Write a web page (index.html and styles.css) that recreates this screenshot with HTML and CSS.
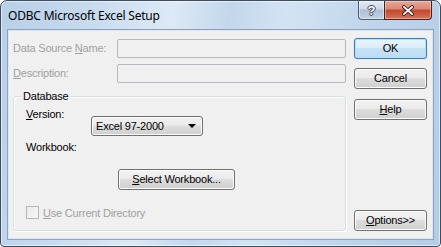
FILE: index.html
```html
<!DOCTYPE html>
<html lang="en">
<head>
  <meta charset="UTF-8" />
  <title>ODBC Microsoft Excel Setup</title>
  <link rel="stylesheet" href="styles.css">
</head>
<body>
  <div class="window">
    <div class="titlebar">
      <span class="title">ODBC Microsoft Excel Setup</span>
      <div class="caption-btns">
        <div class="cap cap-help">?</div>
        <div class="cap cap-close">
          <svg width="12" height="11" viewBox="0 0 12 11">
            <path d="M2 2 L10 9 M10 2 L2 9" stroke="#3b2020" stroke-width="3.6" stroke-linecap="square" />
            <path d="M2 2 L10 9 M10 2 L2 9" stroke="#fff" stroke-width="1.8" stroke-linecap="square" />
          </svg>
        </div>
      </div>
    </div>

    <div class="client">
      <div class="form">
        <div class="field">
          <span class="label disabled">Data Source <u>N</u>ame:</span>
          <div class="edit"></div>
        </div>
        <div class="field">
          <span class="label disabled"><u>D</u>escription:</span>
          <div class="edit"></div>
        </div>

        <div class="group">
          <span class="group-title">Database</span>
          <div class="version-row">
            <span class="label version-label"><u>V</u>ersion:</span>
            <div class="combo">
              <span>Excel 97-2000</span>
              <span class="arrow"></span>
            </div>
          </div>
          <div class="label workbook-label">Workbook:</div>
          <div class="btn select-btn"><u>S</u>elect Workbook...</div>
          <div class="check-row">
            <span class="checkbox"></span>
            <span class="disabled"><u>U</u>se Current Directory</span>
          </div>
        </div>
      </div>

      <div class="buttons">
        <div class="btn btn-default">OK</div>
        <div class="btn btn-cancel">Cancel</div>
        <div class="btn btn-help"><u>H</u>elp</div>
        <div class="btn btn-options"><u>O</u>ptions&gt;&gt;</div>
      </div>
    </div>
  </div>
</body>
</html>
```

FILE: styles.css
```css
* {
  box-sizing: border-box;
}

body {
  margin: 0;
  background: #fff;
}

.window {
  width: 441px;
  height: 247px;
  border: 1px solid #3d4d60;
  border-radius: 7px 7px 4px 4px;
  padding: 0 7px 7px 7px;
  background: linear-gradient(100deg, #b7cfe8 0%, #c6daee 18%, #dde9f6 36%, #c3d7ec 48%, #d3e3f3 60%, #bfd5eb 78%, #b5cce6 100%);
  box-shadow: inset 0 0 0 1px rgba(255, 255, 255, 0.55);
  overflow: hidden;
}

.titlebar {
  height: 29px;
  display: flex;
  justify-content: space-between;
  align-items: flex-start;
}

.title {
  font: 12px "Noto Sans", "Open Sans", sans-serif;
  color: #000;
  margin-top: 7px;
  line-height: 15px;
  letter-spacing: -0.2px;
}

.caption-btns {
  display: flex;
  margin-right: 1px;
}

.cap {
  height: 19px;
  display: flex;
  justify-content: center;
  align-items: center;
  border: 1px solid #4f5f73;
  border-top: none;
}

.cap-help {
  width: 26px;
  border-right: none;
  border-radius: 0 0 0 4px;
  background: linear-gradient(#e4ebf3 0%, #cdd8e5 45%, #aebed2 50%, #c3d2e3 100%);
  color: #fff;
  font: bold 13px "Liberation Sans", Arial, sans-serif;
  text-shadow: 1px 0 0 #3a4a5e, -1px 0 0 #3a4a5e, 0 1px 0 #3a4a5e, 0 -1px 0 #3a4a5e;
  box-shadow: inset 0 0 0 1px rgba(255, 255, 255, 0.45);
}

.cap-close {
  width: 48px;
  border-color: #4a1f1a;
  border-radius: 0 0 4px 0;
  background: linear-gradient(#e8a797 0%, #d98773 45%, #c2462c 50%, #d4735b 100%);
  box-shadow: inset 0 0 0 1px rgba(255, 220, 210, 0.5);
}

.client {
  height: 209px;
  border: 1px solid #dce6f1;
  box-shadow: 0 0 0 1px #8ea3bb;
  background: #f0f0f0;
  display: flex;
  gap: 8px;
  padding: 7px 5px 0 4px;
  font: 11px "Liberation Sans", Arial, sans-serif;
  letter-spacing: -0.2px;
  color: #000;
}

.form {
  width: 333px;
  padding-top: 1px;
}

.disabled {
  color: #a0a0a0;
}

.field {
  display: flex;
  align-items: center;
  justify-content: space-between;
  margin-bottom: 6px;
}

.label {
  line-height: 13px;
}

.edit {
  width: 229px;
  height: 19px;
  border: 1px solid #b4b8bc;
  border-radius: 2px;
  background: #f0f0f0;
}

.group {
  margin-top: 13px;
  height: 135px;
  border: 1px solid #d5dfe5;
  border-radius: 3px;
  box-shadow: inset 1px 1px 0 #fff, 1px 1px 0 #fff;
  padding: 0 0 0 12px;
}

.group-title {
  display: table;
  margin: -7px 0 0 -4px;
  padding: 0 1px;
  line-height: 13px;
  background: #f0f0f0;
}

.version-row {
  display: flex;
  align-items: flex-start;
  margin-top: 13px;
}

.version-label {
  width: 65px;
  margin-top: -8px;
}

.combo {
  width: 112px;
  height: 20px;
  border: 1px solid #707070;
  border-radius: 3px;
  background: linear-gradient(#f2f2f2 0%, #ebebeb 45%, #dddddd 50%, #cfcfcf 100%);
  box-shadow: inset 0 0 0 1px #fbfbfb;
  display: flex;
  align-items: center;
  justify-content: space-between;
  padding: 0 4px 0 4px;
}

.arrow {
  width: 0;
  height: 0;
  border-left: 4px solid transparent;
  border-right: 4px solid transparent;
  border-top: 4px solid #000;
  margin-right: 2px;
}

.workbook-label {
  margin-top: 5px;
}

.btn {
  height: 21px;
  border: 1px solid #707070;
  border-radius: 3px;
  background: linear-gradient(#f2f2f2 0%, #ebebeb 45%, #dddddd 50%, #cfcfcf 100%);
  box-shadow: inset 0 0 0 1px #fcfcfc;
  display: flex;
  align-items: center;
  justify-content: center;
  line-height: 13px;
}

.select-btn {
  width: 117px;
  margin: 15px 0 0 92px;
}

.check-row {
  display: flex;
  align-items: center;
  margin-top: 16px;
  gap: 4px;
}

.checkbox {
  width: 13px;
  height: 13px;
  border: 1px solid #b8b8b8;
  background: linear-gradient(135deg, #eaeaea, #f8f8f8);
}

.buttons {
  width: 73px;
  display: flex;
  flex-direction: column;
}

.btn-default {
  border-color: #3c7fb1;
  background: linear-gradient(#eaf5fc 0%, #dcedf9 45%, #c8e2f5 50%, #bcdcf3 100%);
  box-shadow: inset 0 0 0 1px #aee0fa, 0 0 1px #6fc0ee;
}

.btn-cancel {
  margin-top: 9px;
}

.btn-help {
  margin-top: 10px;
}

.btn-options {
  margin-top: 90px;
}
```
